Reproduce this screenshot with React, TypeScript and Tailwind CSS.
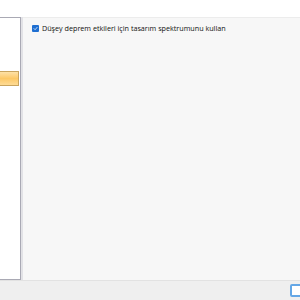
export default function App() {
  return (
    <div className="w-[300px] h-[300px] bg-white flex flex-col overflow-hidden" style={{ fontFamily: '"Open Sans", "Liberation Sans", sans-serif' }}>
      <div className="h-[17px] bg-white shrink-0" />
      <div className="flex flex-1 min-h-0">
        {/* left list panel */}
        <div className="w-[21px] shrink-0 bg-white border-t border-r border-b border-[#a9a9b4] flex flex-col">
          <div className="h-[53px]" />
          <div className="h-[15px] mr-[1px] border-t border-r border-b border-[#c9a45e] bg-gradient-to-b from-[#fde1a6] via-[#fcc866] to-[#fedb94]" />
        </div>
        <div className="w-[2px] shrink-0 bg-[#e2e2e6]" />
        {/* right panel */}
        <div className="flex-1 bg-[#f7f7f7] border-t border-[#ececec] pt-[7px] pl-[9px]">
          <label className="flex items-center gap-[3px] text-[7.2px] leading-none text-[#111]">
            <span className="w-[7px] h-[7px] rounded-[1px] bg-[#1f6fd1] flex items-center justify-center">
              <svg width="5" height="5" viewBox="0 0 10 10" fill="none">
                <path d="M2 5.2 L4.2 7.4 L8.2 2.8" stroke="white" strokeWidth="1.5" strokeLinecap="round" strokeLinejoin="round" />
              </svg>
            </span>
            Düşey deprem etkileri için tasarım spektrumunu kullan
          </label>
        </div>
      </div>
      {/* bottom bar */}
      <div className="h-[20px] shrink-0 bg-[#efefef] border-t border-[#e2e2e2] flex items-center justify-end">
        <div className="w-[14px] h-[13px] mr-[-4px] bg-white border-2 border-[#64a7e6] rounded-[2px]" />
      </div>
    </div>
  );
}
